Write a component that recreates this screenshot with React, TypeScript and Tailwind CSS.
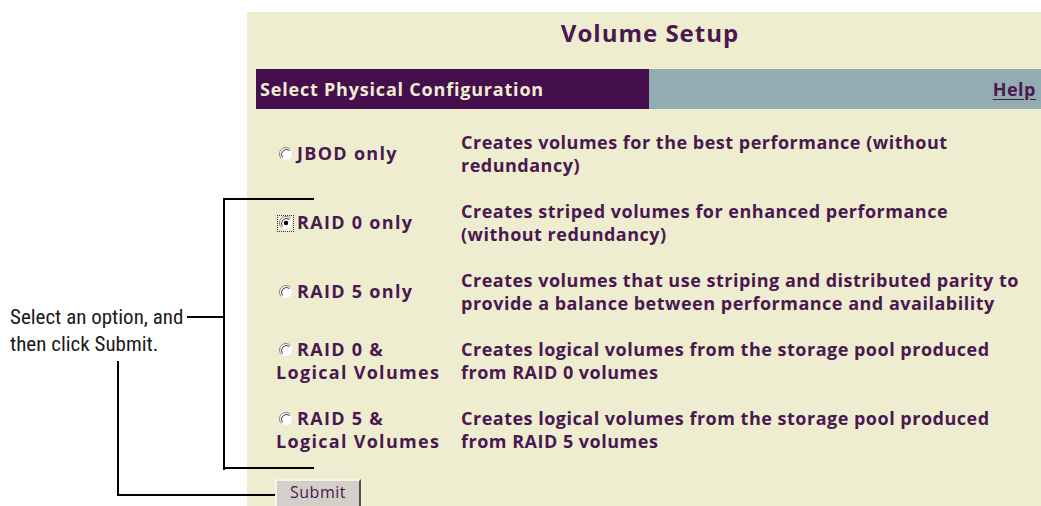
import React from "react";

function Radio({ checked }: { checked?: boolean }) {
  return (
    <span className="relative inline-flex items-center justify-center w-[17px] h-[17px] mr-[3px] ml-[1px] shrink-0 align-[-1px]">
      {checked && (
        <span className="absolute inset-0 border border-dotted border-[#333]" />
      )}
      <svg width="14" height="14" viewBox="0 0 14 14">
        <circle cx="7" cy="7" r="6.5" fill="#fff" />
        <path d="M11.6 2.4 A6.5 6.5 0 0 0 2.4 11.6" fill="none" stroke="#808080" strokeWidth="1" />
        <path d="M10.5 3.5 A5 5 0 0 0 3.5 10.5" fill="none" stroke="#404040" strokeWidth="1" />
        <path d="M2.4 11.6 A6.5 6.5 0 0 0 11.6 2.4" fill="none" stroke="#e4e4e4" strokeWidth="1" />
        {checked && <circle cx="7" cy="7" r="2.2" fill="#000" />}
      </svg>
    </span>
  );
}

const rows: { label: React.ReactNode; desc: React.ReactNode; checked?: boolean }[] = [
  {
    label: <>JBOD only</>,
    desc: (
      <>
        Creates volumes for the best performance (without
        <br />
        redundancy)
      </>
    ),
  },
  {
    label: <>RAID 0 only</>,
    checked: true,
    desc: (
      <>
        Creates striped volumes for enhanced performance
        <br />
        (without redundancy)
      </>
    ),
  },
  {
    label: <>RAID 5 only</>,
    desc: (
      <>
        Creates volumes that use striping and distributed parity to
        <br />
        provide a balance between performance and availability
      </>
    ),
  },
  {
    label: (
      <>
        RAID 0 &amp;
        <br />
        Logical Volumes
      </>
    ),
    desc: (
      <>
        Creates logical volumes from the storage pool produced
        <br />
        from RAID 0 volumes
      </>
    ),
  },
  {
    label: (
      <>
        RAID 5 &amp;
        <br />
        Logical Volumes
      </>
    ),
    desc: (
      <>
        Creates logical volumes from the storage pool produced
        <br />
        from RAID 5 volumes
      </>
    ),
  },
];

export default function App() {
  return (
    <div className="relative w-[1041px] h-[506px] bg-white overflow-hidden flex">
      {/* callout column */}
      <div className="w-[247px] shrink-0 pt-[304px] pl-[10px]">
        <div
          className="text-[21px] leading-[27px] text-[#1a1a1a] whitespace-nowrap"
          style={{ fontFamily: '"Liberation Sans Narrow", "Roboto Condensed", Roboto, sans-serif' }}
        >
          Select an option, and
          <br />
          then click Submit.
        </div>
      </div>

      {/* panel */}
      <div
        className="flex-1 mt-[12px] bg-[#efedcf] text-[#4a1850] font-bold tracking-[0.5px]"
        style={{ fontFamily: '"Open Sans", Lato, sans-serif' }}
      >
        <div className="h-[57px] flex items-start justify-center pt-[3px] text-[24px] tracking-[1px] pl-[12px]">
          Volume Setup
        </div>
        <div className="ml-[9px] h-[40px] flex">
          <div className="w-[393px] bg-[#450f4e] text-[#f0edd2] text-[18px] tracking-[0.8px] flex items-center pl-[4px]">
            Select Physical Configuration
          </div>
          <div className="flex-1 bg-[#93acb2] flex items-center justify-end pr-[5px] text-[18px]">
            <span className="underline underline-offset-[3px]">Help</span>
          </div>
        </div>
        <div className="pt-[10px] pl-[29px]">
          {rows.map((r, i) => (
            <div key={i} className="h-[69px] flex items-center">
              <div className="w-[185px] text-[18px] leading-[23px] tracking-[1.3px] whitespace-nowrap">
                <Radio checked={r.checked} />
                {r.label}
              </div>
              <div className="text-[18px] leading-[23px] whitespace-nowrap">{r.desc}</div>
            </div>
          ))}
          <div className="pt-[15px] -ml-[1px]">
            <button
              className="w-[86px] h-[32px] pb-[6px] bg-[#d4d0c8] border-t-2 border-l-2 border-t-[#f4f4f4] border-l-[#f4f4f4] border-r-2 border-r-[#505050] border-b-2 border-b-[#505050] text-[16px] font-normal tracking-[0.5px] text-[#4a1850] flex items-center justify-center"
              style={{ fontFamily: '"Open Sans", sans-serif' }}
            >
              Submit
            </button>
          </div>
        </div>
      </div>

      {/* callout lines */}
      <div className="absolute left-[223px] top-[198px] w-[91px] h-[2px] bg-black" />
      <div className="absolute left-[223px] top-[198px] w-[2px] h-[272px] bg-black" />
      <div className="absolute left-[223px] top-[467px] w-[91px] h-[2px] bg-black" />
      <div className="absolute left-[187px] top-[316px] w-[36px] h-[2px] bg-black" />
      <div className="absolute left-[117px] top-[361px] w-[2px] h-[135px] bg-black" />
      <div className="absolute left-[117px] top-[494px] w-[158px] h-[2px] bg-black" />
    </div>
  );
}
